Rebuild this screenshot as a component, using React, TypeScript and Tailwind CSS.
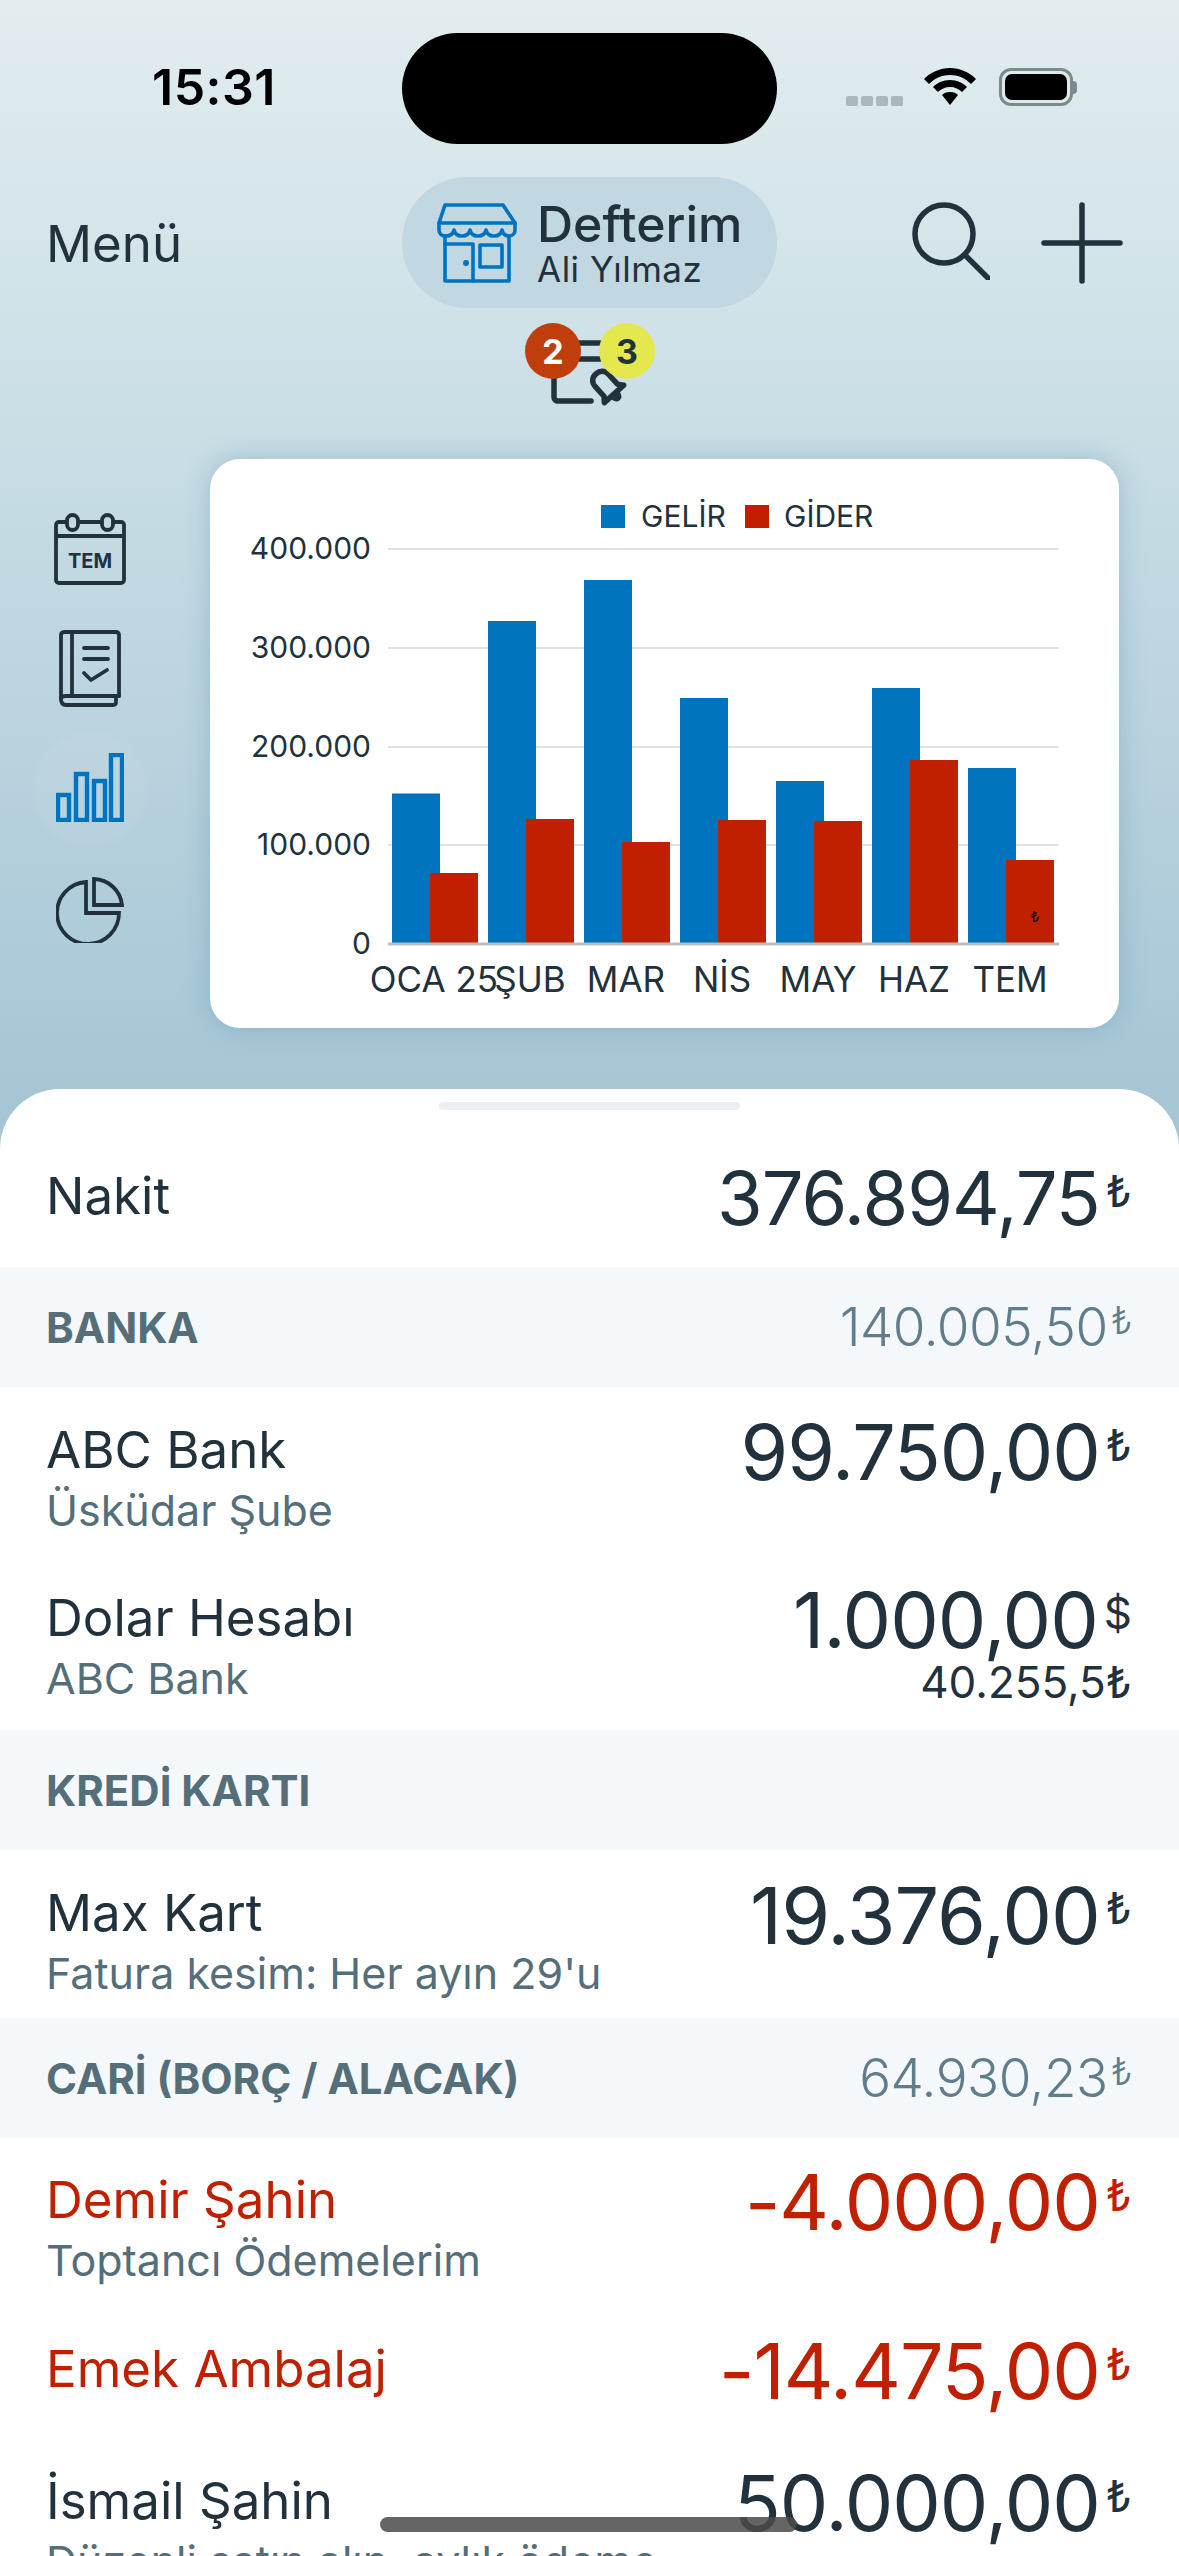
const blue = "#0073bf";
const red = "#c02000";
const ink = "#22323c";

const months = [
  { label: "OCA 25", gelir: 150.5, gider: 71 },
  { label: "ŞUB", gelir: 323, gider: 125 },
  { label: "MAR", gelir: 364, gider: 102 },
  { label: "NİS", gelir: 246, gider: 124 },
  { label: "MAY", gelir: 163, gider: 123 },
  { label: "HAZ", gelir: 256, gider: 184 },
  { label: "TEM", gelir: 176, gider: 84 },
];

const ticks = [
  { label: "400.000", y: 90 },
  { label: "300.000", y: 189 },
  { label: "200.000", y: 288 },
  { label: "100.000", y: 386 },
];

const Chart = () => (
  <svg width="909" height="569" viewBox="0 0 909 569" fontFamily="Inter, sans-serif">
    <rect x="391" y="46" width="24" height="23" fill={blue} />
    <text x="431" y="68" fontSize="30" fill={ink}>GELİR</text>
    <rect x="535" y="46" width="24" height="23" fill={red} />
    <text x="574" y="68" fontSize="30" fill={ink}>GİDER</text>
    {ticks.map((t) => (
      <g key={t.label}>
        <line x1="178" x2="849" y1={t.y} y2={t.y} stroke="#e2e2e2" strokeWidth="2" />
        <text x="161" y={t.y + 10} textAnchor="end" fontSize="30" fill={ink}>{t.label}</text>
      </g>
    ))}
    <text x="161" y="495" textAnchor="end" fontSize="30" fill={ink}>0</text>
    {months.map((m, i) => (
      <g key={m.label}>
        <rect x={182 + i * 96} y={485 - m.gelir} width="48" height={m.gelir} fill={blue} />
        <rect x={220 + i * 96} y={485 - m.gider} width="48" height={m.gider} fill={red} />
        <text x={224 + i * 96} y="533" textAnchor="middle" fontSize="35" fill={ink}>{m.label}</text>
      </g>
    ))}
    <line x1="178" x2="849" y1="485" y2="485" stroke="#bdbdbd" strokeWidth="3" />
    <text x="825" y="463" textAnchor="middle" fontSize="15" fill="#111">₺</text>
  </svg>
);

const StoreIcon = () => (
  <svg width="80" height="80" viewBox="0 0 80 80" fill="none" stroke={blue} strokeWidth="3.6" strokeLinejoin="round" strokeLinecap="round">
    <path d="M8 2H66L78 20H2Z" />
    <path d="M2 20V27C2 31 5 33 9 33C13 33 16 31 17 27C18 31 21 33 25 33C29 33 32 31 33 27C34 31 37 33 41 33C45 33 48 31 49 27C50 31 53 33 57 33C61 33 64 31 65 27C66 31 69 33 72 33C76 33 78 30 78 27V20" />
    <path d="M8 33V78H72V33" />
    <path d="M8 41H36V78" />
    <rect x="43" y="42" width="22" height="22" />
    <circle cx="29" cy="60" r="1.2" fill={blue} />
  </svg>
);

const SearchIcon = () => (
  <svg width="78" height="78" viewBox="0 0 78 78" fill="none" stroke={ink} strokeWidth="5.5" strokeLinecap="round">
    <circle cx="32" cy="32" r="29" />
    <path d="M53 53L76 76" />
  </svg>
);

const PlusIcon = () => (
  <svg width="82" height="82" viewBox="0 0 82 82" fill="none" stroke={ink} strokeWidth="5.5" strokeLinecap="round">
    <path d="M41 3V79M3 41H79" />
  </svg>
);

const AlertIcon = () => (
  <svg width="95" height="85" viewBox="0 0 95 85" fill="none" stroke={ink} strokeWidth="5.5" strokeLinecap="round" strokeLinejoin="round">
    <path d="M9 40V72C9 75 11 76 13 76H46" />
    <path d="M28 18H66M28 34H66" />
    <g transform="translate(61 60) rotate(-42)">
      <path d="M-9 7V-6C-9 -12 -5 -15 0 -15C5 -15 9 -12 9 -6V7L13 12H-13Z" />
      <path d="M-3 14C-2 19 2 19 3 14" />
    </g>
  </svg>
);

const CalendarIcon = () => (
  <svg width="72" height="72" viewBox="0 0 72 72" fill="none" stroke={ink} strokeWidth="3.8" strokeLinejoin="round">
    <rect x="2" y="9" width="68" height="61" rx="3" />
    <path d="M2 23H70" />
    <rect x="13" y="2" width="11" height="15" rx="5.5" fill="#c4dae3" />
    <rect x="48" y="2" width="11" height="15" rx="5.5" fill="#c4dae3" />
    <text x="36" y="55" textAnchor="middle" fontSize="20" fontWeight="700" fontFamily="Inter, sans-serif" fill={ink} stroke="none">TEM</text>
  </svg>
);

const BookIcon = () => (
  <svg width="62" height="77" viewBox="0 0 62 77" fill="none" stroke={ink} strokeWidth="3.8" strokeLinecap="round" strokeLinejoin="round">
    <path d="M60 66V5C60 3 59 2 57 2H6C3 2 2 3 2 5V69C2 73 4 75 7 75H54C56 75 57 74 57 72V66" />
    <path d="M2 69C2 67 4 66 7 66H60" />
    <path d="M13 2V66" />
    <path d="M25 18H49M25 29H49" />
    <path d="M25 43L32 50L48 40" />
  </svg>
);

const BarsIcon = () => (
  <svg width="68" height="69" viewBox="0 0 68 69" fill="none" stroke={blue} strokeWidth="4.4">
    <rect x="2" y="42" width="11" height="25" />
    <rect x="20" y="21" width="11" height="46" />
    <rect x="38" y="28" width="11" height="39" />
    <rect x="55" y="2" width="11" height="65" />
  </svg>
);

const PieIcon = () => (
  <svg width="68" height="66" viewBox="0 0 68 66" fill="none" stroke={ink} strokeWidth="3.8" strokeLinejoin="miter">
    <path d="M30 5A31 31 0 1 0 63 36H30Z" />
    <path d="M38 2A29 29 0 0 1 66 28H38Z" />
  </svg>
);

const WifiIcon = () => (
  <svg width="52" height="37" viewBox="0 0 52 37" fill="#000">
    <path d="M26 0C16 0 7 4 0 11L5 16C11 10 18 7 26 7C34 7 41 10 47 16L52 11C45 4 36 0 26 0Z" />
    <path d="M26 12C19 12 13 15 9 19L14 24C17 21 21 19 26 19C31 19 35 21 38 24L43 19C39 15 33 12 26 12Z" />
    <path d="M26 24C22 24 20 25 18 27L26 37L34 27C32 25 30 24 26 24Z" />
  </svg>
);

const Battery = () => (
  <div className="flex items-center">
    <div className="w-[74px] h-[38px] rounded-[12px] border-[3px] border-[#7c8a8c] p-[3px]">
      <div className="w-full h-full rounded-[7px] bg-black" />
    </div>
    <div className="w-[4px] h-[13px] rounded-r-full bg-[#7c8a8c]" />
  </div>
);

const SectionHeader = ({ title, total, h }: { title: string; total?: string; h: string }) => (
  <div className={`flex items-center justify-between pl-[46px] pr-[47px] bg-[#f4f8fa] ${h}`}>
    <span className="text-[42px] font-bold text-[#546e7a]">{title}</span>
    {total && (
      <span className="flex items-start text-[53px] font-light text-[#607d8b] leading-[60px] tracking-[-0.5px]">
        {total}
        <span className="text-[38px] leading-[46px] ml-[3px]">₺</span>
      </span>
    )}
  </div>
);

type RowProps = {
  name: string;
  sub?: string;
  amount: string;
  cur?: string;
  extra?: string;
  negative?: boolean;
  h: string;
  pt?: string;
  size?: string;
};

const Row = ({ name, sub, amount, cur = "₺", extra, negative, h, pt = "pt-[33px]", size = "text-[77px]" }: RowProps) => {
  const color = negative ? "text-[#c02000]" : "text-[#22323c]";
  return (
    <div className={`flex justify-between pl-[46px] pr-[47px] ${h} ${pt}`}>
      <div className="flex flex-col">
        <span className={`text-[51px] leading-[60px] ${color}`}>{name}</span>
        {sub && <span className="text-[43px] leading-[60px] text-[#546e7a]">{sub}</span>}
      </div>
      <div className="flex flex-col items-end">
        <span className={`flex items-start leading-[64px] tracking-[-1px] ${size} ${color}`}>
          {amount}
          <span className="text-[44px] leading-[50px] ml-[6px] tracking-normal">{cur}</span>
        </span>
        {extra && <span className="text-[44px] leading-[52px] text-[#22323c] mt-[4px]">{extra}</span>}
      </div>
    </div>
  );
};

export default function App() {
  return (
    <div className="relative w-[1179px] h-[2556px] overflow-hidden flex flex-col font-[Inter,sans-serif] bg-gradient-to-b from-[#e2edef] via-[#c8dde5] via-[18%] to-[#a6c6d6] to-[43%] text-[#22323c]">
      {/* status bar */}
      <div className="grid grid-cols-[402px_375px_402px] pt-[33px] h-[144px]">
        <div className="pl-[152px] pt-[29px] text-[50px] leading-[50px] font-semibold text-black tracking-[0.5px]">15:31</div>
        <div className="h-[111px] rounded-[56px] bg-black" />
        <div className="flex items-start pl-[69px] pt-[35px]">
          <div className="flex gap-[3px] mt-[28px]">
            <div className="w-[12px] h-[10px] rounded-[2px] bg-[#a9b8bc]" />
            <div className="w-[12px] h-[10px] rounded-[2px] bg-[#a9b8bc]" />
            <div className="w-[12px] h-[10px] rounded-[2px] bg-[#a9b8bc]" />
            <div className="w-[12px] h-[10px] rounded-[2px] bg-[#a9b8bc]" />
          </div>
          <div className="ml-[21px]"><WifiIcon /></div>
          <div className="ml-[23px]"><Battery /></div>
        </div>
      </div>

      {/* nav */}
      <div className="grid grid-cols-[402px_375px_402px] mt-[33px] h-[131px]">
        <div className="pl-[46px] flex items-center text-[51px] pt-[4px]">Menü</div>
        <div className="rounded-[65px] bg-[#c1d7e1] flex items-center pl-[35px] gap-[20px]">
          <StoreIcon />
          <div className="flex flex-col">
            <span className="text-[50px] leading-[52px] font-medium">Defterim</span>
            <span className="text-[35px] leading-[38px] tracking-[0.5px]">Ali Yılmaz</span>
          </div>
        </div>
        <div className="flex items-start pt-[25px] pl-[135px] gap-[51px]">
          <SearchIcon />
          <PlusIcon />
        </div>
      </div>

      {/* reminders */}
      <div className="flex justify-center pt-[17px] h-[85px] box-content">
        <div className="relative w-[95px] h-[85px] ml-[6px]">
          <AlertIcon />
          <div className="absolute left-[-20px] top-[-2px] w-[56px] h-[56px] rounded-full bg-[#bf3e0c] flex items-center justify-center text-white text-[34px] font-bold">2</div>
          <div className="absolute left-[54px] top-[-2px] w-[56px] h-[56px] rounded-full bg-[#e4e84e] flex items-center justify-center text-[#22323c] text-[34px] font-bold">3</div>
        </div>
      </div>

      {/* chart area */}
      <div className="flex mt-[49px] h-[569px]">
        <div className="relative w-[210px] flex flex-col items-center pr-[30px] pt-[54px]">
          <CalendarIcon />
          <div className="mt-[45px]"><BookIcon /></div>
          <div className="mt-[46px] relative">
            <div className="absolute left-[-24px] top-[-22px] w-[116px] h-[116px] rounded-full bg-white/[0.05] blur-[3px]" />
            <div className="relative"><BarsIcon /></div>
          </div>
          <div className="mt-[55px]"><PieIcon /></div>
        </div>
        <div className="w-[909px] h-[569px] rounded-[30px] bg-white shadow-[0_0_26px_rgba(90,140,170,0.4)]">
          <Chart />
        </div>
      </div>

      {/* accounts sheet */}
      <div className="mt-[61px] flex-1 bg-white rounded-t-[60px] overflow-hidden">
        <div className="flex justify-center pt-[13px] h-[21px] box-content">
          <div className="w-[301px] h-[8px] rounded-full bg-[#e9eff3]" />
        </div>
        <Row name="Nakit" amount="376.894,75" size="text-[74px]" h="h-[144px]" pt="pt-[43px]" />
        <SectionHeader title="BANKA" total="140.005,50" h="h-[120px]" />
        <Row name="ABC Bank" sub="Üsküdar Şube" amount="99.750,00" h="h-[168px]" />
        <Row name="Dolar Hesabı" sub="ABC Bank" amount="1.000,00" cur="$" extra="40.255,5₺" h="h-[175px]" />
        <SectionHeader title="KREDİ KARTI" h="h-[120px]" />
        <Row name="Max Kart" sub="Fatura kesim: Her ayın 29'u" amount="19.376,00" size="text-[79px]" h="h-[168px]" />
        <SectionHeader title="CARİ (BORÇ / ALACAK)" total="64.930,23" h="h-[120px]" />
        <Row name="Demir Şahin" sub="Toptancı Ödemelerim" amount="-4.000,00" negative h="h-[166px]" pt="pt-[32px]" />
        <Row name="Emek Ambalaj" amount="-14.475,00" negative h="h-[134px]" pt="pt-[35px]" />
        <Row name="İsmail Şahin" sub="Düzenli satın alın, aylık ödeme" amount="50.000,00" h="h-[168px]" />
      </div>

      {/* home indicator */}
      <div className="absolute left-[380px] top-[2517px] w-[417px] h-[15px] rounded-full bg-[#4a4a4a]/85" />
    </div>
  );
}
